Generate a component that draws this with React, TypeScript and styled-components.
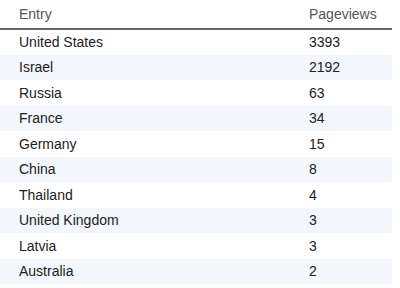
import * as React from "react";
import styled, { createGlobalStyle } from "styled-components";

const Global = createGlobalStyle`
	body {
		margin: 0;
		background: #fff;
		font-family: "Liberation Sans", Arial, sans-serif;
	}
`;

const Table = styled.table`
	width: 392px;
	border-collapse: collapse;
	font-size: 14px;
	color: #222;
`;
const HeadCell = styled.th`
	text-align: left;
	font-weight: normal;
	color: #555;
	height: 28px;
	padding: 0 0 0 19px;
	border-bottom: 2px solid #666;
	vertical-align: middle;
`;
const Row = styled.tr<{ $striped: boolean }>`
	background: ${(p) => (p.$striped ? "#f3f6fa" : "#fff")};
`;
const Cell = styled.td<{ $num?: boolean }>`
	height: 25.5px;
	box-sizing: border-box;
	padding: 0 0 0 19px;
	width: ${(p) => (p.$num ? "102px" : "auto")};
`;

const rows: [string, number][] = [
	["United States", 3393],
	["Israel", 2192],
	["Russia", 63],
	["France", 34],
	["Germany", 15],
	["China", 8],
	["Thailand", 4],
	["United Kingdom", 3],
	["Latvia", 3],
	["Australia", 2],
];

const App = () => {
	return (
		<>
			<Global />
			<Table>
				<thead>
					<tr>
						<HeadCell>Entry</HeadCell>
						<HeadCell>Pageviews</HeadCell>
					</tr>
				</thead>
				<tbody>
					{rows.map(([name, views], i) => (
						<Row key={name} $striped={i % 2 === 1}>
							<Cell>{name}</Cell>
							<Cell $num>{views}</Cell>
						</Row>
					))}
				</tbody>
			</Table>
		</>
	);
};

export default App;
